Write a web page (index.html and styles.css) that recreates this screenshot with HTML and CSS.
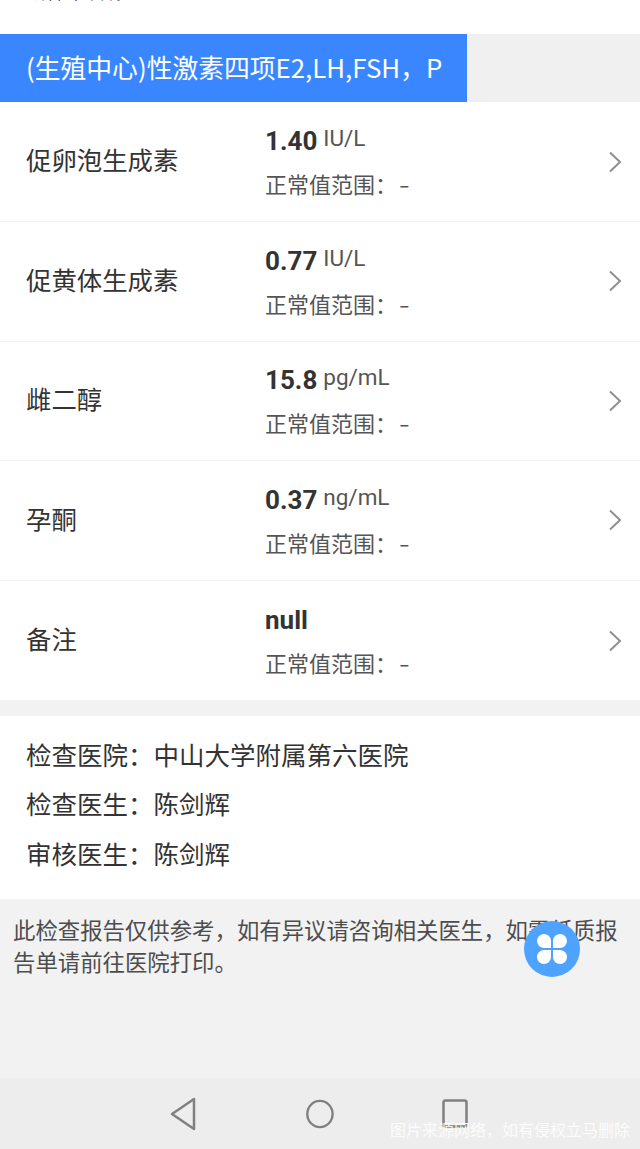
FILE: index.html
```html
<!DOCTYPE html>
<html lang="zh-CN">
<head>
    <meta charset="UTF-8">
    <meta name="viewport" content="width=device-width, initial-scale=1.0">
    <title>检查报告</title>
    <link rel="stylesheet" href="styles.css">
</head>
<body>
    <div class="page">
        <div class="top-cut"><span>钱样本名称</span></div>
        <div class="tab-bar">
            <div class="tab-active">(生殖中心)性激素四项E2,LH,FSH，P</div>
        </div>

        <div class="result-list">
            <div class="result-row">
                <div class="result-name">促卵泡生成素</div>
                <div class="result-info">
                    <div class="result-value"><b>1.40</b><span>IU/L</span></div>
                    <div class="result-range">正常值范围：<i>-</i></div>
                </div>
                <svg class="chevron" viewBox="0 0 14 22"><path d="M2 1.5L12 11L2 20.5"/></svg>
            </div>
            <div class="result-row">
                <div class="result-name">促黄体生成素</div>
                <div class="result-info">
                    <div class="result-value"><b>0.77</b><span>IU/L</span></div>
                    <div class="result-range">正常值范围：<i>-</i></div>
                </div>
                <svg class="chevron" viewBox="0 0 14 22"><path d="M2 1.5L12 11L2 20.5"/></svg>
            </div>
            <div class="result-row">
                <div class="result-name">雌二醇</div>
                <div class="result-info">
                    <div class="result-value"><b>15.8</b><span>pg/mL</span></div>
                    <div class="result-range">正常值范围：<i>-</i></div>
                </div>
                <svg class="chevron" viewBox="0 0 14 22"><path d="M2 1.5L12 11L2 20.5"/></svg>
            </div>
            <div class="result-row">
                <div class="result-name">孕酮</div>
                <div class="result-info">
                    <div class="result-value"><b>0.37</b><span>ng/mL</span></div>
                    <div class="result-range">正常值范围：<i>-</i></div>
                </div>
                <svg class="chevron" viewBox="0 0 14 22"><path d="M2 1.5L12 11L2 20.5"/></svg>
            </div>
            <div class="result-row">
                <div class="result-name">备注</div>
                <div class="result-info">
                    <div class="result-value"><b>null</b></div>
                    <div class="result-range">正常值范围：<i>-</i></div>
                </div>
                <svg class="chevron" viewBox="0 0 14 22"><path d="M2 1.5L12 11L2 20.5"/></svg>
            </div>
        </div>

        <div class="doctor-box">
            <div>检查医院：中山大学附属第六医院</div>
            <div>检查医生：陈剑辉</div>
            <div>审核医生：陈剑辉</div>
        </div>

        <div class="notice">此检查报告仅供参考，如有异议请咨询相关医生，如需纸质报告单请前往医院打印。</div>

        <div class="nav-bar">
            <svg class="nav-icon" viewBox="0 0 28 36"><path d="M25 3V33L3 18Z"/></svg>
            <svg class="nav-icon" viewBox="0 0 32 36"><ellipse cx="17" cy="18" rx="13.5" ry="14"/></svg>
            <svg class="nav-icon" viewBox="0 0 28 36"><rect x="2.5" y="4.5" width="23" height="26" rx="2"/></svg>
        </div>
    </div>

    <div class="float-btn">
        <svg viewBox="0 0 34 34"><path d="M16 16H8.5A7 7 0 1 1 16 8.5ZM18 16V8.5A7 7 0 1 1 25.5 16ZM16 18V25.5A7 7 0 1 1 8.5 18ZM18 18H25.5A7 7 0 1 1 18 25.5Z"/></svg>
    </div>
    <div class="watermark">图片来源网络，如有侵权立马删除</div>
</body>
</html>
```

FILE: styles.css
```css
html, body {
    margin: 0;
    padding: 0;
}
body {
    position: relative;
    width: 640px;
    height: 1149px;
    overflow: hidden;
    background-color: #f2f2f2;
    color: #333;
    font-family: "Noto Sans CJK SC", "Roboto", sans-serif;
}
.page {
    display: flex;
    flex-direction: column;
    height: 100%;
}
.top-cut {
    height: 34px;
    padding-left: 26px;
    background-color: #fff;
    overflow: hidden;
}
.top-cut span {
    display: block;
    margin-top: -23px;
    font-size: 20px;
    line-height: 28px;
}
.tab-bar {
    height: 68px;
    background-color: #f0f0f0;
}
.tab-active {
    width: 467px;
    height: 68px;
    box-sizing: border-box;
    padding-left: 26px;
    background-color: #3a86ff;
    color: #fff;
    font-size: 25.8px;
    line-height: 66px;
    white-space: nowrap;
}
.result-list {
    padding-top: 0.4px;
    background-color: #fff;
}
.result-row {
    display: flex;
    align-items: center;
    height: 119.6px;
    box-sizing: border-box;
    padding: 0 18px 0 26px;
    border-bottom: 1px solid #f2f2f2;
}
.result-row:last-child {
    border-bottom: none;
}
.result-name {
    width: 239px;
    padding-bottom: 5px;
    font-size: 25.4px;
    line-height: 30px;
}
.result-info {
    flex: 1;
    padding-bottom: 3px;
}
.result-value {
    height: 46px;
    line-height: 36px;
}
.result-value b {
    font-family: "Roboto", sans-serif;
    font-size: 26px;
    font-weight: 700;
}
.result-value span {
    margin-left: 6px;
    position: relative;
    top: -4px;
    color: #555;
    font-family: "Roboto", sans-serif;
    font-size: 22.5px;
}
.result-range {
    color: #555;
    font-size: 22px;
    line-height: 28px;
}
.result-range i {
    margin-left: 2px;
    font-style: normal;
    display: inline-block;
    transform: scaleX(1.4);
    transform-origin: left;
}
.chevron {
    width: 14px;
    height: 22px;
    fill: none;
    stroke: #8f8f8f;
    stroke-width: 2;
}
.doctor-box {
    margin-top: 15.6px;
    padding: 13px 26px 22px;
    background-color: #fff;
    font-size: 25.5px;
    line-height: 49.5px;
}
.notice {
    flex: 1;
    padding: 14px 13px 0;
    color: #4d4d4d;
    font-size: 22.4px;
    line-height: 32px;
}
.nav-bar {
    display: flex;
    justify-content: center;
    align-items: center;
    gap: 106px;
    height: 71px;
    padding-right: 2px;
    background-color: #ededed;
}
.nav-icon {
    width: 30px;
    height: 36px;
    fill: none;
    stroke: #808080;
    stroke-width: 2.5;
    stroke-linejoin: round;
}
.float-btn {
    position: absolute;
    left: 524px;
    top: 921px;
    width: 56px;
    height: 56px;
    display: flex;
    align-items: center;
    justify-content: center;
    border-radius: 50%;
    background-color: #4da3ff;
}
.float-btn svg {
    width: 34px;
    height: 34px;
    fill: #fff;
}
.watermark {
    position: absolute;
    right: 10px;
    top: 1119px;
    color: rgba(255, 255, 255, 0.85);
    font-size: 16px;
    line-height: 20px;
}
```
